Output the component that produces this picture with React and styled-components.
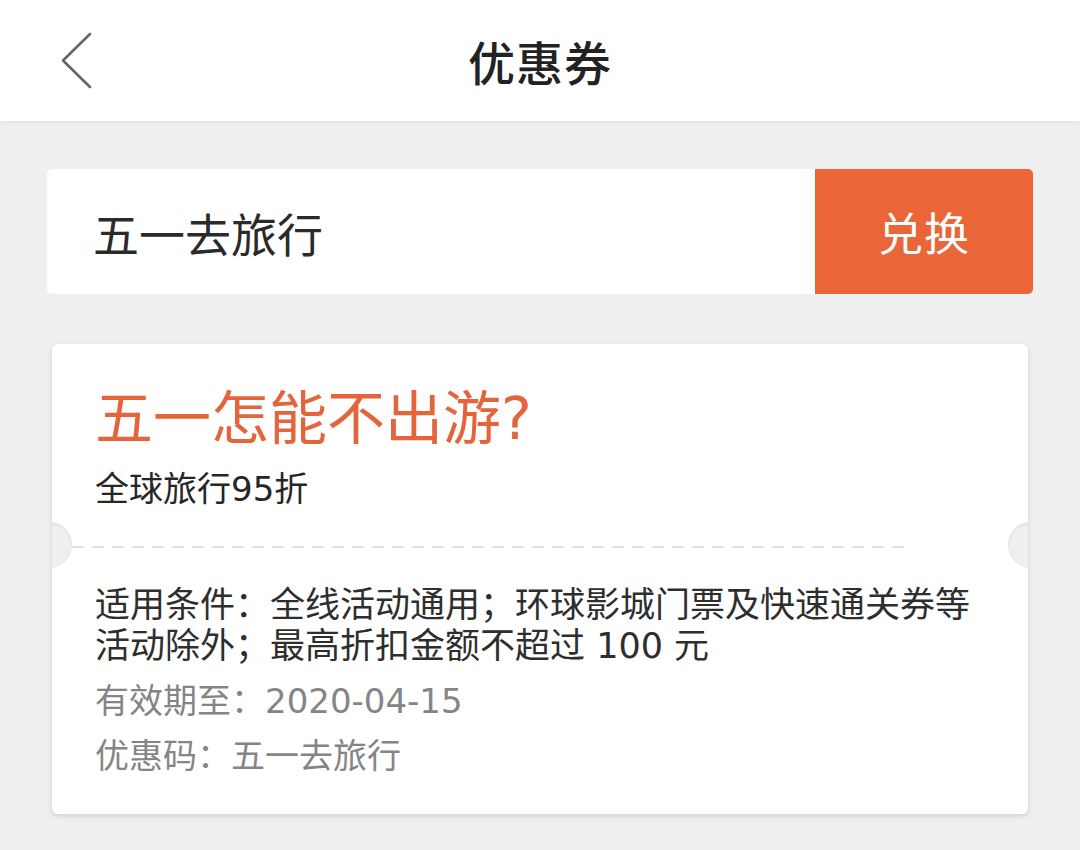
import React from "react";
import styled, { createGlobalStyle } from "styled-components";

const GlobalStyle = createGlobalStyle`
  html, body {
    margin: 0;
    padding: 0;
    background: #efeff0;
    font-family: "DejaVu Sans", "Noto Sans CJK SC", sans-serif;
  }
`;

const Page = styled.div`
  width: 1080px;
  min-height: 850px;
  background: #efeff0;
`;

const Header = styled.header`
  display: grid;
  grid-template-columns: 1fr auto 1fr;
  align-items: center;
  height: 121px;
  background: #fff;
  box-shadow: 0 1px 3px rgba(0, 0, 0, 0.06);
`;

const BackButton = styled.button`
  justify-self: start;
  display: flex;
  align-items: center;
  margin-left: 61px;
  padding: 0;
  border: 0;
  background: none;
  cursor: pointer;
`;

const Title = styled.h1`
  margin: 0;
  font-size: 47px;
  font-weight: 500;
  color: #222;
  letter-spacing: 1px;
`;

const Main = styled.main`
  display: flex;
  flex-direction: column;
  gap: 50px;
  padding: 48px 47px 0;
`;

const RedeemBar = styled.div`
  display: flex;
  height: 125px;
  border-radius: 5px;
  overflow: hidden;
  background: #fff;
`;

const CodeInput = styled.input`
  flex: 1;
  min-width: 0;
  border: 0;
  outline: none;
  padding: 0 0 0 46px;
  font-family: inherit;
  font-size: 46px;
  color: #2a2a2a;
  background: transparent;
`;

const RedeemButton = styled.button`
  width: 218px;
  border: 0;
  background: #ea6638;
  color: #fff;
  font-family: inherit;
  font-size: 45px;
  letter-spacing: 1px;
  cursor: pointer;
`;

const Coupon = styled.section`
  position: relative;
  overflow: hidden;
  margin: 0 5px;
  background: #fff;
  border-radius: 6px;
  box-shadow: 0 2px 5px rgba(0, 0, 0, 0.13);
`;

const CouponTop = styled.div`
  padding: 43px 43px 37px;
`;

const CouponName = styled.h2`
  margin: 0;
  font-size: 58px;
  line-height: 64px;
  font-weight: 400;
  color: #e4653b;
`;

const Discount = styled.div`
  margin-top: 18px;
  font-size: 34px;
  line-height: 40px;
  color: #262626;
`;

const Divider = styled.div`
  margin: 0 120px 0 20px;
  height: 2px;
  background-image: linear-gradient(to right, #e0e0e0 60%, transparent 0);
  background-size: 20px 2px;
  background-repeat: repeat-x;
`;

const Notch = styled.span`
  position: absolute;
  top: 178px;
  ${(p) => (p.side === "left" ? "left: -26px;" : "right: -26px;")}
  width: 46px;
  height: 46px;
  border-radius: 50%;
  background: #efeff0;
  box-shadow: inset 0 1px 3px rgba(0, 0, 0, 0.1);
`;

const CouponBody = styled.div`
  padding: 37px 43px 38px;
`;

const Rules = styled.p`
  margin: 0;
  font-size: 35px;
  line-height: 41px;
  color: #2e2e2e;
`;

const Meta = styled.p`
  margin: ${(p) => p.gap}px 0 0;
  font-size: 34px;
  line-height: 40px;
  color: #858585;
`;

const ChevronLeft = () => (
  <svg width="32" height="58" viewBox="0 0 32 58">
    <polyline
      points="29,2 2,28.5 29,55"
      fill="none"
      stroke="#666"
      strokeWidth="2.6"
      strokeLinecap="round"
      strokeLinejoin="round"
    />
  </svg>
);

export default function App() {
  return (
    <>
      <GlobalStyle />
      <Page>
        <Header>
          <BackButton aria-label="返回">
            <ChevronLeft />
          </BackButton>
          <Title>优惠券</Title>
          <span />
        </Header>
        <Main>
          <RedeemBar>
            <CodeInput defaultValue="五一去旅行" />
            <RedeemButton>兑换</RedeemButton>
          </RedeemBar>
          <Coupon>
            <CouponTop>
              <CouponName>五一怎能不出游?</CouponName>
              <Discount>全球旅行95折</Discount>
            </CouponTop>
            <Divider />
            <Notch side="left" />
            <Notch side="right" />
            <CouponBody>
              <Rules>
                适用条件：全线活动通用；环球影城门票及快速通关券等
                <br />
                活动除外；最高折扣金额不超过 100 元
              </Rules>
              <Meta gap={14}>有效期至：2020-04-15</Meta>
              <Meta gap={15}>优惠码：五一去旅行</Meta>
            </CouponBody>
          </Coupon>
        </Main>
      </Page>
    </>
  );
}
